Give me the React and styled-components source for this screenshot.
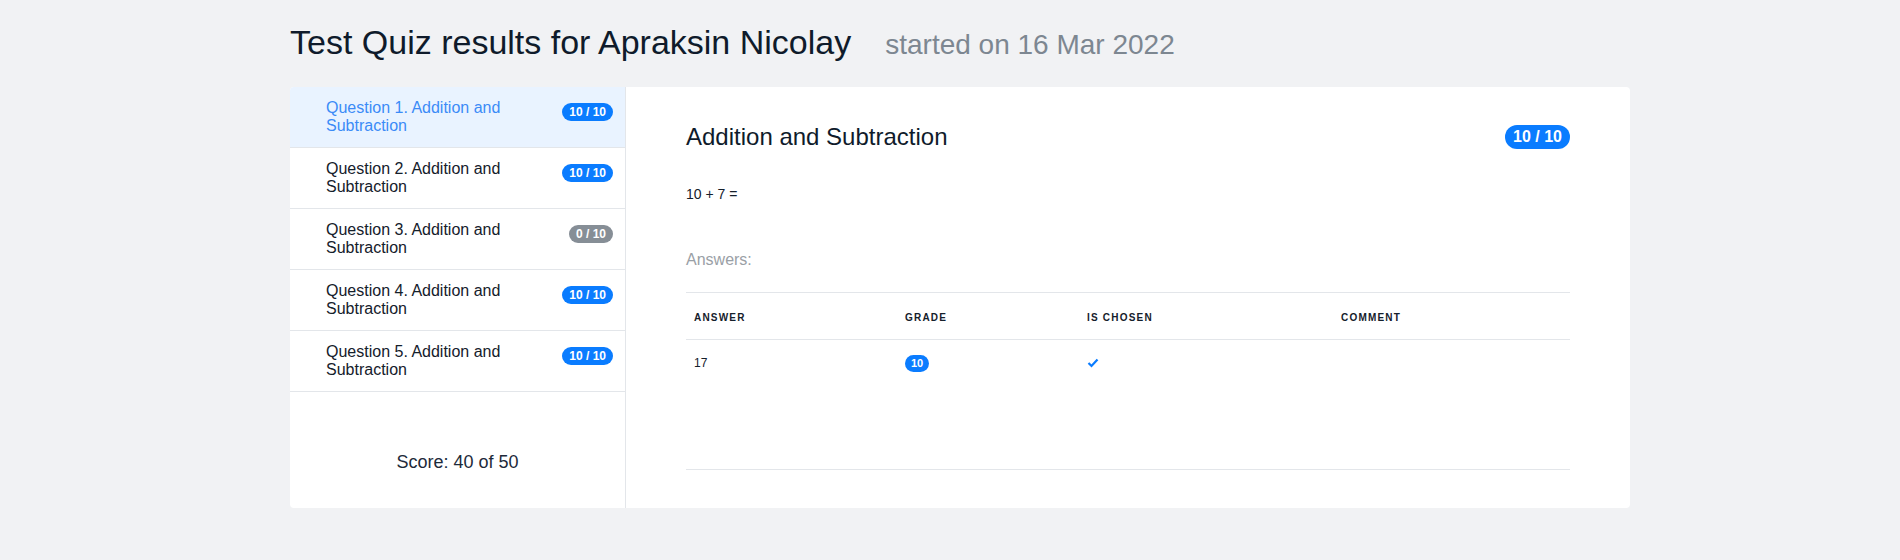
import styled, { createGlobalStyle } from 'styled-components';

const GlobalStyle = createGlobalStyle`
  *, *::before, *::after {
    box-sizing: border-box;
  }
  body {
    margin: 0;
    background: #f1f2f4;
    font-family: "Liberation Sans", Arial, sans-serif;
    color: #15202b;
  }
`;

const Page = styled.div`
  padding: 0 0 0 20px;
`;

const Container = styled.div`
  width: 1340px;
  margin: 0 auto;
`;

const TitleRow = styled.div`
  display: flex;
  align-items: baseline;
  gap: 34px;
  padding-top: 22px;
  margin-bottom: 24px;
`;

const Title = styled.h1`
  margin: 0;
  font-size: 34px;
  font-weight: 400;
  line-height: 1.2;
  color: #0f1b2b;
`;

const Started = styled.span`
  font-size: 28px;
  color: #7d8791;
`;

const Card = styled.div`
  display: flex;
  background: #fff;
  border-radius: 4px;
  overflow: hidden;
`;

const Sidebar = styled.div`
  flex: 0 0 336px;
  border-right: 1px solid #e3e6ea;
  display: flex;
  flex-direction: column;
`;

const QuestionItem = styled.div`
  display: flex;
  align-items: center;
  justify-content: space-between;
  height: 61px;
  padding: 0 12px 0 36px;
  border-bottom: 1px solid #e3e6ea;
  background: ${(p) => (p.active ? '#e9f3ff' : '#fff')};
  color: ${(p) => (p.active ? '#3b8bf7' : '#15202b')};
`;

const QuestionName = styled.div`
  width: 220px;
  font-size: 16px;
  line-height: 18px;
`;

const Badge = styled.span`
  display: inline-block;
  background: ${(p) => (p.muted ? '#868e96' : '#0a7cff')};
  color: #fff;
  font-weight: 700;
  font-size: ${(p) => p.size || 12}px;
  line-height: ${(p) => (p.size ? p.size + 2 : 14)}px;
  padding: ${(p) => p.pad || '2px 7px'};
  border-radius: 999px;
  white-space: nowrap;
`;

const ItemBadge = styled(Badge)`
  margin-bottom: 10px;
`;

const Score = styled.div`
  padding-top: 60px;
  text-align: center;
  font-size: 18px;
  line-height: 20px;
  color: #1d2a3a;
`;

const Main = styled.div`
  flex: 1;
  min-width: 0;
  padding: 36px 60px 38px;
`;

const MainHeader = styled.div`
  display: flex;
  align-items: center;
  justify-content: space-between;
  height: 28px;
`;

const Heading = styled.h2`
  margin: 0;
  font-size: 24px;
  font-weight: 400;
  line-height: 28px;
  color: #0f1b2b;
`;

const QuestionText = styled.div`
  margin-top: 33px;
  font-size: 14px;
  line-height: 21px;
`;

const AnswersLabel = styled.div`
  margin-top: 43px;
  font-size: 16px;
  line-height: 24px;
  color: #9aa0a6;
`;

const Table = styled.table`
  margin-top: 20px;
  width: 100%;
  border-collapse: collapse;
  table-layout: fixed;
`;

const Th = styled.th`
  width: ${(p) => p.w}px;
  text-align: left;
  padding: 19px 8px 15px;
  font-size: 10px;
  line-height: 12px;
  font-weight: 700;
  letter-spacing: 1.2px;
  text-transform: uppercase;
  color: #15202b;
  border-top: 1px solid #e3e6ea;
  border-bottom: 1px solid #e3e6ea;
`;

const Td = styled.td`
  padding: 15px 8px 13px;
  font-size: 12px;
  line-height: 16px;
  vertical-align: middle;
`;

const Divider = styled.div`
  margin-top: 84px;
  height: 1px;
  background: #e3e6ea;
`;

const Check = () => (
  <svg width="12" height="10" viewBox="0 0 12 10" style={{ display: 'block' }}>
    <polyline points="1.5,5 4.5,8 10.5,1.5" fill="none" stroke="#0a7cff" strokeWidth="2.2" />
  </svg>
);

const questions = [
  { id: 1, score: 10 },
  { id: 2, score: 10 },
  { id: 3, score: 0 },
  { id: 4, score: 10 },
  { id: 5, score: 10 },
];

export default function App() {
  return (
    <Page>
      <GlobalStyle />
      <Container>
        <TitleRow>
          <Title>Test Quiz results for Apraksin Nicolay</Title>
          <Started>started on 16 Mar 2022</Started>
        </TitleRow>
        <Card>
          <Sidebar>
            {questions.map((q) => (
              <QuestionItem key={q.id} active={q.id === 1}>
                <QuestionName>Question {q.id}. Addition and Subtraction</QuestionName>
                <ItemBadge muted={q.score === 0}>{q.score} / 10</ItemBadge>
              </QuestionItem>
            ))}
            <Score>Score: 40 of 50</Score>
          </Sidebar>
          <Main>
            <MainHeader>
              <Heading>Addition and Subtraction</Heading>
              <Badge size={16} pad="3px 8px">10 / 10</Badge>
            </MainHeader>
            <QuestionText>10 + 7 =</QuestionText>
            <AnswersLabel>Answers:</AnswersLabel>
            <Table>
              <thead>
                <tr>
                  <Th w={211}>Answer</Th>
                  <Th w={182}>Grade</Th>
                  <Th w={254}>Is chosen</Th>
                  <Th w={237}>Comment</Th>
                </tr>
              </thead>
              <tbody>
                <tr>
                  <Td>17</Td>
                  <Td>
                    <Badge size={11} pad="2px 6px">10</Badge>
                  </Td>
                  <Td>
                    <Check />
                  </Td>
                  <Td></Td>
                </tr>
              </tbody>
            </Table>
            <Divider />
          </Main>
        </Card>
      </Container>
    </Page>
  );
}
